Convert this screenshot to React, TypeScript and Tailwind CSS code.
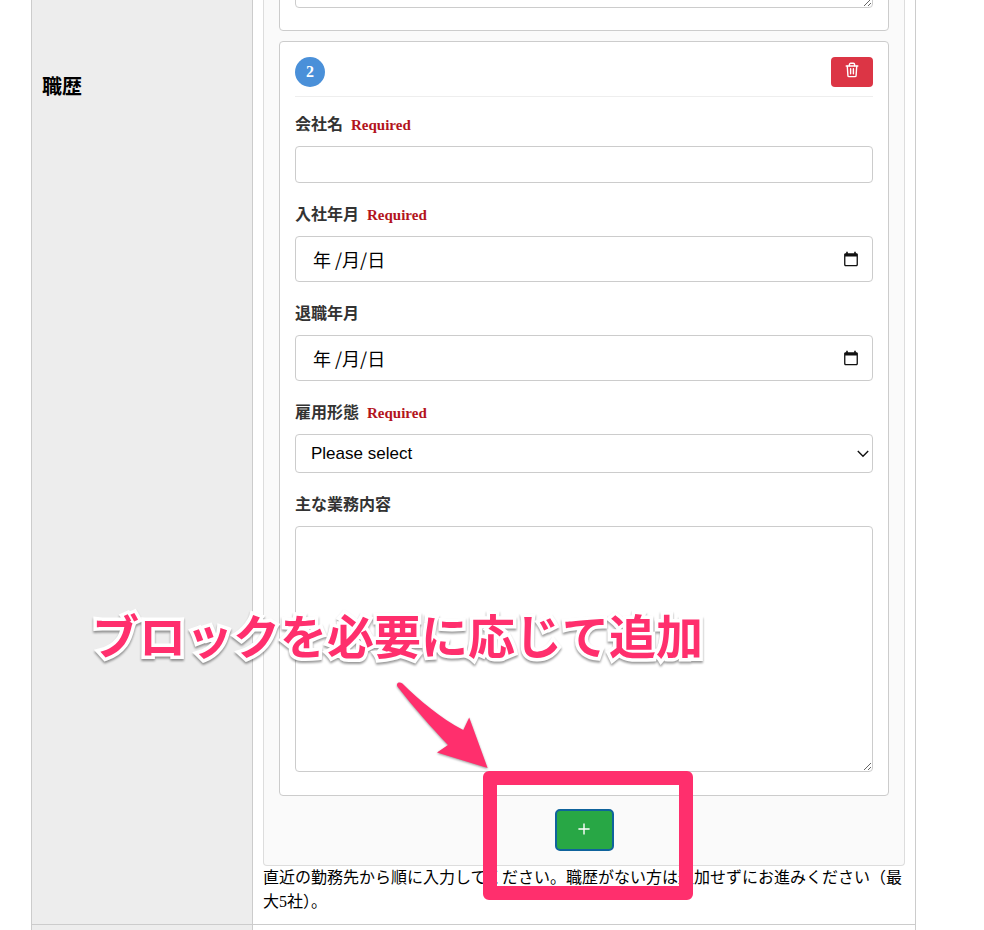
import React, { useId, useState } from 'react';

const fieldBox = 'w-full rounded border border-[#ccc] bg-white';

const TrashIcon: React.FC = () => (
  <svg width="14" height="16" viewBox="0 0 14 16" fill="none" stroke="currentColor" strokeWidth="1.4" strokeLinecap="round" strokeLinejoin="round" aria-hidden="true">
    <path d="M1.2 4h11.6" />
    <path d="M4.4 3.8V2.6c0-.8.5-1.3 1.3-1.3h2.6c.8 0 1.3.5 1.3 1.3v1.2" />
    <path d="M2.3 4.2l.6 9.2c0 .8.5 1.2 1.2 1.2h5.8c.7 0 1.2-.4 1.2-1.2l.6-9.2" />
    <path d="M5.6 6.8v5M8.4 6.8v5" />
  </svg>
);

const CalendarIcon: React.FC = () => (
  <svg width="14" height="16" viewBox="0 0 14 16" aria-hidden="true">
    <path d="M2.2.8h1.6v1.4h6.4V.8h1.6v1.4h.6c.9 0 1.5.6 1.5 1.4v10.2c0 .9-.6 1.5-1.5 1.5H1.6c-.9 0-1.5-.6-1.5-1.5V3.6c0-.8.6-1.4 1.5-1.4h.6V.8zM1.4 5.6v7.9c0 .3.2.5.5.5h10.2c.3 0 .5-.2.5-.5V5.6H1.4z" fill="#111" fillRule="evenodd" />
  </svg>
);

interface FieldProps {
  label: string;
  required?: boolean;
  children: (id: string) => React.ReactNode;
}

const Field: React.FC<FieldProps> = ({ label, required, children }) => {
  const id = useId();
  return (
    <div>
      <label htmlFor={id} className="mb-[9px] flex items-center gap-2 text-base leading-6 font-bold text-[#333]">
        {label}
        {required && <span className="text-[15px] leading-6 text-[#b3141c]">Required</span>}
      </label>
      {children(id)}
    </div>
  );
};

const DateBox: React.FC<{ id: string }> = ({ id }) => (
  <div className={`${fieldBox} flex h-[46px] items-center pr-3.5 pl-[17px]`}>
    <input
      id={id}
      type="text"
      placeholder="年 /月/日"
      className="min-w-0 flex-1 font-['Noto_Sans_CJK_JP',sans-serif] text-lg text-black outline-none placeholder:text-black"
    />
    <button type="button" aria-label="日付を選択">
      <CalendarIcon />
    </button>
  </div>
);

const ExperienceBlock: React.FC<{ index: number }> = ({ index }) => (
  <section className="rounded border border-[#ccc] bg-white px-[15px] pt-[15px] pb-[23px]">
    <header className="mb-4 flex items-center justify-between border-b border-[#eee] pb-[9px]">
      <span className="flex size-[30px] items-center justify-center rounded-full bg-[#4a90d9] text-base font-bold text-white">
        {index}
      </span>
      <button type="button" aria-label="削除" className="flex h-[30px] w-[42px] items-center justify-center rounded bg-[#dc3545] pb-1 text-white">
        <TrashIcon />
      </button>
    </header>

    <div className="flex flex-col gap-5">
      <Field label="会社名" required>
        {id => <input id={id} type="text" className={`${fieldBox} block h-[37px] px-[15px]`} />}
      </Field>
      <Field label="入社年月" required>
        {id => <DateBox id={id} />}
      </Field>
      <Field label="退職年月">
        {id => <DateBox id={id} />}
      </Field>
      <Field label="雇用形態" required>
        {id => (
          <div className="relative">
            <select id={id} className={`${fieldBox} block h-[39px] appearance-none px-[15px] font-['Liberation_Sans','Noto_Sans_CJK_JP',sans-serif] text-[17px] text-black`}>
              <option>Please select</option>
            </select>
            <svg className="pointer-events-none absolute top-4 right-1" width="12" height="8" viewBox="0 0 12 8" fill="none" stroke="#111" strokeWidth="1.4" aria-hidden="true">
              <path d="M.8 1l5.2 5.2L11.2 1" />
            </svg>
          </div>
        )}
      </Field>
      <Field label="主な業務内容">
        {id => <textarea id={id} className={`${fieldBox} block h-[246px] p-[15px]`} />}
      </Field>
    </div>
  </section>
);

const Annotation: React.FC = () => (
  <div className="pointer-events-none">
    <p className="absolute top-[604px] left-[60px] font-['Noto_Sans_CJK_JP',sans-serif] text-[47px] leading-[60px] font-bold whitespace-nowrap text-[#ff2f6d] drop-shadow-[0_2px_1px_rgba(0,0,0,0.4)] [-webkit-text-stroke:7px_white] [paint-order:stroke_fill]">
      ブロックを必要に応じて追加
    </p>
    <svg className="absolute top-[680px] left-[363px] drop-shadow-[0_1px_1px_rgba(0,0,0,0.4)]" width="96" height="92" viewBox="0 0 96 92" aria-hidden="true">
      <path d="M2.2 3.8C3 2 5.6 2 7.4 3.6C24 20 45 38 68.3 50L74.2 37.5L92.6 88L42 72.5L53 65C37 48 18 27 2.6 6.8C1.8 5.6 1.8 4.8 2.2 3.8z" fill="#ff2f6d" />
    </svg>
    <div className="absolute top-[771px] left-[451px] h-[129px] w-[210px] rounded-md border-[14px] border-[#ff2f6d]" />
  </div>
);

const App: React.FC = () => {
  const [blocks, setBlocks] = useState([2]);

  const addBlock = () => {
    if (blocks.length < 4) setBlocks([...blocks, blocks.length + 2]);
  };

  return (
    <div className="min-h-screen bg-white pr-[68px] pl-[31px] font-['Liberation_Serif','Noto_Sans_CJK_JP',serif] text-black">
      <main className="relative flex min-h-screen flex-col border-x border-[#ccc]">
        <div className="grid grid-cols-[220px_minmax(0,1fr)] border-b border-[#ccc]">
          <h2 className="bg-[#ededed] px-2.5 pt-[73px] text-xl leading-7 font-bold">職歴</h2>
          <div className="border-l border-[#ccc] px-2.5 pb-2.5">
            <div className="rounded-b border-x border-b border-[#ddd] bg-[#fafafa] px-[15px] pb-3.5">
              {/* tail of the block that is scrolled off the top */}
              <div className="mb-2.5 flex h-[31px] flex-col justify-end overflow-hidden">
                <div className="rounded border border-[#ccc] bg-white px-[15px] pb-[22px]">
                  <textarea aria-label="主な業務内容" className={`${fieldBox} block h-[246px] p-[15px]`} />
                </div>
              </div>
              <div className="flex flex-col gap-2.5">
                {blocks.map(n => <ExperienceBlock key={n} index={n} />)}
              </div>
              <div className="mt-[13px] flex justify-center">
                <button
                  type="button"
                  aria-label="追加"
                  onClick={addBlock}
                  className="flex h-[42px] w-[59px] items-center justify-center rounded-[5px] border-2 border-[#0f639c] bg-[#28a745] pb-0.5 text-white"
                >
                  <svg width="12" height="12" viewBox="0 0 12 12" stroke="currentColor" strokeWidth="1.4" aria-hidden="true">
                    <path d="M6 .4v11.2M.4 6h11.2" />
                  </svg>
                </button>
              </div>
            </div>
            <p className="text-base leading-6">
              直近の勤務先から順に入力してください。職歴がない方は追加せずにお進みください（最大5社）。
            </p>
          </div>
        </div>
        <div className="grid flex-1 grid-cols-[220px_minmax(0,1fr)]">
          <div className="bg-[#ededed]" />
          <div className="border-l border-[#ccc]" />
        </div>
        <Annotation />
      </main>
    </div>
  );
};

export default App;
